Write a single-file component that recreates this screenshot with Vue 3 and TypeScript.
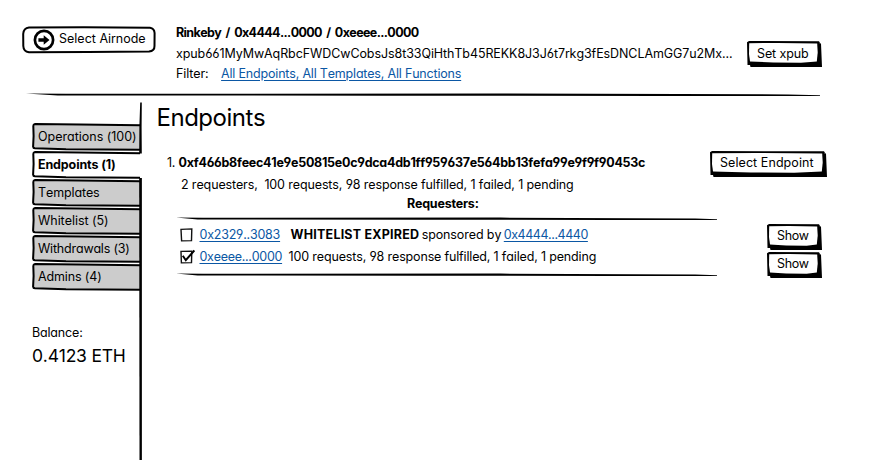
<script setup lang="ts">
import type { Directive } from 'vue'

interface Tab { label: string; width: number; active?: boolean }

const tabs: Tab[] = [
  { label: 'Operations (100)', width: 98 },
  { label: 'Endpoints (1)', width: 77, active: true },
  { label: 'Templates', width: 61 },
  { label: 'Whitelist (5)', width: 70 },
  { label: 'Withdrawals (3)', width: 91 },
  { label: 'Admins (4)', width: 63 },
]

// Tracks a label out or in until it spans the given number of pixels.
const vFit: Directive<HTMLElement, number> = {
  mounted(el, { value }) {
    const count = el.textContent?.length ?? 1
    const spacing = (value + 0.6 - el.getBoundingClientRect().width) / count
    el.style.letterSpacing = `${spacing.toFixed(3)}px`
  },
}

// Hand-drawn button: a heavy drop edge with a slightly wobbly face on top.
const shadow = (w: number, h: number) =>
  `M3 ${h - 4}L${w - 4} 2L${w - 1} 2.5L${w} ${h}L3.5 ${h}L3 ${h - 2}L0.5 ${h - 2}L0 1.2L2 0L${w - 3} 0.3L${w - 2} 2Z`
const face = (w: number, h: number) =>
  `M2.2 2.2L${w * 0.4} 1.9L${w - 4.8} 2.4L${w - 4.3} ${h * 0.45}L${w - 5.2} ${h - 5.4}L${w * 0.72} ${h - 4.3}L${w * 0.35} ${h - 4.6}L3 ${h - 5.4}L2 ${h * 0.5}Z`

// Pen stroke that thins out at both ends.
const rule = (w: number) =>
  `M0 0.5L${w * 0.05} 0.7L${w * 0.6} 0.6L${w * 0.96} 1.4L${w} 2.2L${w} 3L${w * 0.8} 3L${w * 0.45} 2.7L${w * 0.04} 2.4Z`
</script>

<template>
  <div class="page">
    <header class="header">
      <button class="airnode">
        <svg class="ink" width="134" height="28" viewBox="0 0 134 28">
          <path d="M7 1.6L62 1.2L128 1.7Q132.3 2.3 132.6 7L132.5 20Q132.6 25 127 25.6L66 26L7 26.3Q1.5 25.4 1.3 20L1.2 8Q1.6 2.2 7 1.6Z" fill="#fff" stroke="#000" stroke-width="2" />
        </svg>
        <svg class="arrow" width="22" height="22" viewBox="0 0 22 22">
          <circle cx="11" cy="11" r="9.1" fill="none" stroke="#000" stroke-width="2.7" />
          <path d="M5.4 9.3H10.7V6.2L16.5 11L10.7 15.8V12.7H5.4Z" fill="#000" />
        </svg>
        <span v-fit="86">Select Airnode</span>
      </button>
      <div class="account">
        <div class="line"><b class="path" v-fit="242">Rinkeby / 0x4444...0000 / 0xeeee...0000</b></div>
        <div class="line"><span v-fit="556">xpub661MyMwAqRbcFWDCwCobsJs8t33QiHthTb45REKK8J3J6t7rkg3fEsDNCLAmGG7u2Mx...</span></div>
        <div class="line filter">
          <span v-fit="32">Filter:</span>
          <a v-fit="239.5">All Endpoints, All Templates, All Functions</a>
        </div>
      </div>
      <button class="btn xpub">
        <svg class="ink" width="75" height="26"><path :d="shadow(75, 26)" /><path :d="face(75, 26)" fill="#fff" /></svg>
        <span v-fit="51">Set xpub</span>
      </button>
    </header>

    <svg class="divider" width="794" height="4"><path :d="rule(794)" /></svg>

    <div class="body">
      <aside class="sidebar">
        <svg class="rail" width="4" height="358" viewBox="0 0 4 358">
          <path d="M1.2 0.5L2.8 0.5L2.6 25L2.8 51.5L0.2 51.5L0.4 24Z" />
          <path d="M0.2 76H2.9V358H0.5Z" />
        </svg>
        <nav class="tabs">
          <div v-for="tab in tabs" :key="tab.label" class="tab" :class="{ active: tab.active }">
            <svg class="ink" width="109" height="29" viewBox="0 0 109 29">
              <path class="fill" d="M2 1.4L108 2V26.8L50 26.3L2 25.4Z" />
              <path class="edge" d="M108 2.2L48 1.6L3 1.1Q1.3 1.3 1.3 3L1.6 13L1.1 23.6Q1.2 25.2 3 25.3L34 26.3L108 26.7" />
            </svg>
            <span v-fit="tab.width">{{ tab.label }}</span>
          </div>
        </nav>
        <div class="balance"><span v-fit="50">Balance:</span></div>
        <div class="amount"><span v-fit="93">0.4123 ETH</span></div>
      </aside>

      <main class="main">
        <h1><span v-fit="108">Endpoints</span></h1>
        <section class="endpoint">
          <div class="info">
            <div class="hash"><span v-fit="7.5">1.</span><b v-fit="466">0xf466b8feec41e9e50815e0c9dca4db1ff959637e564bb13fefa99e9f9f90453c</b></div>
            <div class="stats"><span v-fit="392">2 requesters,&nbsp; 100 requests, 98 response fulfilled, 1 failed, 1 pending</span></div>
          </div>
          <button class="btn select">
            <svg class="ink" width="117" height="26"><path :d="shadow(117, 26)" /><path :d="face(117, 26)" fill="#fff" /></svg>
            <span v-fit="93">Select Endpoint</span>
          </button>
        </section>

        <div class="caption"><b v-fit="71">Requesters:</b></div>

        <section class="requesters">
          <div class="list">
            <svg class="rule" width="541" height="4"><path :d="rule(541)" /></svg>
            <div class="row">
              <svg class="check" width="15" height="16" viewBox="0 0 15 16">
                <path d="M1 2.4L11.8 1.9L11.5 13.6L1.6 13.9Z" fill="#fff" stroke="#111" stroke-width="1.4" />
              </svg>
              <a class="address" v-fit="80">0x2329..3083</a>
              <span class="detail first"><b v-fit="128">WHITELIST EXPIRED</b><span v-fit="79">sponsored by</span><a v-fit="83.5">0x4444...4440</a></span>
            </div>
            <div class="row">
              <svg class="check" width="15" height="16" viewBox="0 0 15 16">
                <path d="M1 2.4L11.8 2.1L11.5 13.6L1.4 13.9Z" fill="#fff" stroke="#111" stroke-width="1.4" />
                <path d="M2.8 6.8L5.8 11.2L14.4 1.4" fill="none" stroke="#000" stroke-width="2" />
              </svg>
              <a class="address" v-fit="82">0xeeee...0000</a>
              <span class="detail"><span v-fit="307">100 requests, 98 response fulfilled, 1 failed, 1 pending</span></span>
            </div>
            <svg class="rule bottom" width="541" height="4"><path :d="rule(541)" /></svg>
          </div>
          <div class="actions">
            <button v-for="n in 2" :key="n" class="btn show">
              <svg class="ink" width="55" height="26"><path :d="shadow(55, 26)" /><path :d="face(55, 26)" fill="#fff" /></svg>
              <span v-fit="31">Show</span>
            </button>
          </div>
        </section>
      </main>
    </div>
  </div>
</template>

<style>
body { background: #fff; }
</style>

<style scoped>
.page {
  width: 870px;
  height: 460px;
  overflow: hidden;
  display: flex;
  flex-direction: column;
  background: #fff;
  color: #000;
  font-family: Inter, "Liberation Sans", sans-serif;
  font-size: 12.5px;
  line-height: 20px;
  font-feature-settings: "cv11", "cv03", "cv04";
  font-kerning: none;
  white-space: nowrap;
}
svg { display: block; flex: none; }
b { font-weight: 700; }
a { color: #0b57a4; text-decoration: underline; text-decoration-thickness: 1px; text-underline-offset: 2px; }
button {
  font: inherit;
  font-feature-settings: inherit;
  color: inherit;
  border: 0;
  padding: 0;
  background: none;
  position: relative;
  display: flex;
  align-items: center;
  flex: none;
}
button > span, .tab > span, .arrow { position: relative; }
.ink { position: absolute; left: 0; top: 0; }

.header { display: flex; height: 93px; flex: none; padding-left: 22px; box-sizing: border-box; }
.airnode { width: 134px; height: 28px; margin-top: 26px; padding-left: 11px; gap: 4px; }
.airnode > span { top: -1px; }
.account { width: 571px; margin-left: 20px; padding-top: 23px; }
.line { height: 20.5px; }
.path { word-spacing: 2px; }
.filter { display: flex; gap: 12.5px; }
.btn { height: 26px; padding: 0 0 3px 10px; box-sizing: border-box; }
.btn.xpub { width: 75px; margin-top: 41px; padding-bottom: 1px; }
.divider { margin-left: 26px; }

.body { display: flex; flex: 1; }
.sidebar { width: 143px; position: relative; box-sizing: border-box; padding: 26px 0 0 32px; }
.rail { position: absolute; left: 139px; top: 5px; z-index: 1; }
.tab { position: relative; height: 28px; line-height: 27px; padding-left: 6px; }
.fill { fill: #ccc; }
.edge { fill: none; stroke: #000; stroke-width: 2; }
.active { font-weight: 700; }
.active .fill { fill: #fff; }
.balance { margin-top: 32px; }
.amount { font-size: 17.5px; line-height: 24px; margin-top: 1px; }

.main { padding: 6px 0 0 13.5px; }
h1 { margin: 0; font-size: 24px; font-weight: 400; line-height: 30px; }
.endpoint { display: flex; margin-top: 18px; padding-left: 10.5px; }
.info { width: 543px; padding-top: 2px; }
.hash { display: flex; gap: 3.5px; }
.stats { padding: 2px 0 0 14px; }
.select { width: 117px; }
.caption { padding-left: 250.5px; margin-top: -1px; }
.requesters { display: flex; padding-left: 19.5px; margin-top: 3px; }
.list { width: 591px; }
.row { display: flex; align-items: center; height: 22px; padding-left: 4px; }
.rule { margin-bottom: 3px; }
.rule.bottom { margin: 5px 0 0; }
.address { margin-left: 4.5px; }
.detail { margin-left: 6.5px; }
.first { display: flex; gap: 2.5px; margin-left: 10.5px; }
.actions { display: flex; flex-direction: column; gap: 2px; padding-top: 7px; }
.show { width: 55px; }
</style>
